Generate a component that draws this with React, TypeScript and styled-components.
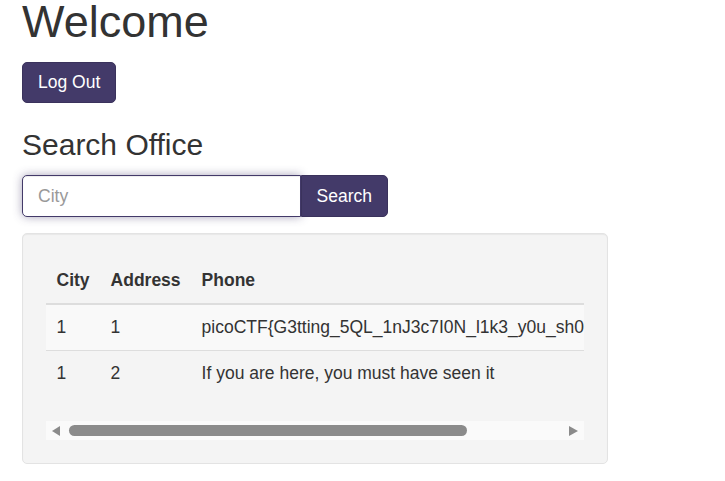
import { styled, createGlobalStyle } from "styled-components";

const GlobalStyle = createGlobalStyle`
    html, body {
        margin: 0;
        padding: 0;
        background: #fff;
    }
    body {
        font-family: "Liberation Sans", Arial, Helvetica, sans-serif;
        font-size: 17.5px;
        line-height: 1.42857;
        color: #333;
    }
    * { box-sizing: border-box; }
`;

const Page = styled.div`
    padding: 0 22px;
`;

const Title = styled.h1`
    font-size: 45px;
    font-weight: 500;
    line-height: 1.1;
    margin: -3px 0 15px;
`;

const Heading = styled.h3`
    font-size: 30px;
    font-weight: 500;
    line-height: 1.1;
    margin: 25px 0 13.5px;
`;

const Button = styled.button<{ $joined?: boolean }>`
    display: inline-block;
    font-family: inherit;
    font-size: 17.5px;
    line-height: 1.42857;
    padding: 7.5px 15px;
    color: #fff;
    background: #433a69;
    border: 1.25px solid #3a325c;
    border-radius: ${p => (p.$joined ? "0 5px 5px 0" : "5px")};
    cursor: pointer;
`;

const SearchForm = styled.form`
    display: flex;
    width: 366px;
    margin-bottom: 16px;
`;

const CityInput = styled.input`
    width: 279px;
    height: 42.5px;
    padding: 7.5px 15px;
    font-family: inherit;
    font-size: 17.5px;
    color: #555;
    background: #fff;
    border: 1.25px solid #433a69;
    border-radius: 5px 0 0 5px;
    outline: none;
    box-shadow: inset 0 1px 1px rgba(0, 0, 0, 0.075), 0 0 10px rgba(67, 58, 105, 0.45);
    caret-color: #333;
    &::placeholder { color: #999; }
`;

const Well = styled.div`
    width: 586px;
    padding: 24px 23px 23px;
    background: #f4f4f4;
    border: 1px solid #e3e3e3;
    border-radius: 5px;
    box-shadow: inset 0 1px 1px rgba(0, 0, 0, 0.05);
`;

const Scroller = styled.div`
    overflow: hidden;
`;

const Table = styled.table`
    width: 100%;
    border-collapse: collapse;
    border-spacing: 0;
    margin-bottom: 25px;
`;

const Th = styled.th`
    text-align: left;
    font-weight: bold;
    padding: 10px 10.5px;
    line-height: 25px;
    white-space: nowrap;
    border-bottom: 2.5px solid #ddd;
`;

const Row = styled.tr<{ $striped?: boolean }>`
    background: ${p => (p.$striped ? "#f9f9f9" : "transparent")};
`;

const Td = styled.td`
    padding: 10px 10.5px;
    line-height: 25px;
    white-space: nowrap;
    border-top: 1.25px solid #ddd;
`;

const ScrollBar = styled.div`
    display: flex;
    align-items: center;
    height: 19px;
    background: #fafafa;
`;

const ArrowBox = styled.div<{ $dir: "left" | "right" }>`
    width: 19px;
    height: 19px;
    display: flex;
    align-items: center;
    justify-content: ${p => (p.$dir === "left" ? "flex-end" : "flex-start")};
    padding: ${p => (p.$dir === "left" ? "0 5px 0 0" : "0 0 0 4px")};
    &::before {
        content: "";
        width: 0;
        height: 0;
        border-top: 5px solid transparent;
        border-bottom: 5px solid transparent;
        ${p => (p.$dir === "left" ? "border-right: 8px solid #8b8b8b;" : "border-left: 9px solid #8b8b8b;")}
    }
`;

const Track = styled.div`
    flex: 1;
    height: 100%;
    display: flex;
    align-items: center;
    padding: 0 4px;
`;

const Thumb = styled.div`
    height: 11px;
    border-radius: 6px;
    background: #8b8b8b;
`;

const rows = [
    { city: "1", address: "1", phone: "picoCTF{G3tting_5QL_1nJ3c7I0N_l1k3_y0u_sh0u1d_78d0583a}" },
    { city: "1", address: "2", phone: "If you are here, you must have seen it" },
];

export default function App() {
    return <Page>
        <GlobalStyle />
        <Title>Welcome</Title>
        <Button type="button">Log Out</Button>
        <Heading>Search Office</Heading>
        <SearchForm onSubmit={e => e.preventDefault()}>
            <CityInput placeholder="City" autoFocus />
            <Button type="submit" $joined>Search</Button>
        </SearchForm>
        <Well>
            <Scroller>
                <Table>
                    <thead>
                        <tr>
                            <Th>City</Th>
                            <Th>Address</Th>
                            <Th>Phone</Th>
                        </tr>
                    </thead>
                    <tbody>
                        {rows.map((r, i) => <Row key={i} $striped={i % 2 === 0}>
                            <Td>{r.city}</Td>
                            <Td>{r.address}</Td>
                            <Td>{r.phone}</Td>
                        </Row>)}
                    </tbody>
                </Table>
            </Scroller>
            <ScrollBar>
                <ArrowBox $dir="left" />
                <Track>
                    <Thumb style={{ width: 398 }} />
                </Track>
                <ArrowBox $dir="right" />
            </ScrollBar>
        </Well>
    </Page>;
}
